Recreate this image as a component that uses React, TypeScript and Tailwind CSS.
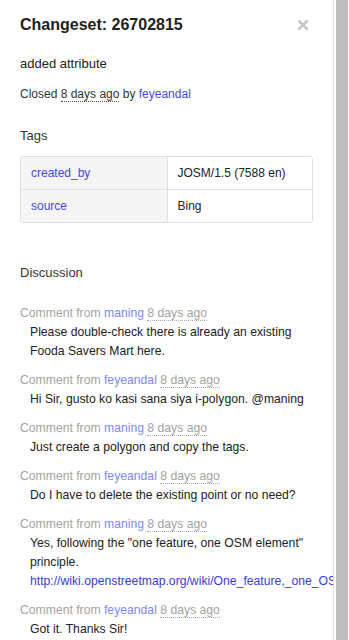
import React from "react";

interface Comment {
  author: string;
  lines: React.ReactNode;
}

const comments: Comment[] = [
  { author: "maning", lines: "Please double-check there is already an existing Fooda Savers Mart here." },
  { author: "feyeandal", lines: "Hi Sir, gusto ko kasi sana siya i-polygon. @maning" },
  { author: "maning", lines: "Just create a polygon and copy the tags." },
  { author: "feyeandal", lines: "Do I have to delete the existing point or no need?" },
  {
    author: "maning",
    lines: (
      <>
        Yes, following the "one feature, one OSM element" principle.
        <br />
        <a href="#" className="whitespace-nowrap text-[#3a3ae0]">
          http://wiki.openstreetmap.org/wiki/One_feature,_one_OSM_element
        </a>
      </>
    ),
  },
  { author: "feyeandal", lines: "Got it. Thanks Sir!" },
];

const tags = [
  { key: "created_by", value: "JOSM/1.5 (7588 en)" },
  { key: "source", value: "Bing" },
];

export default function App() {
  return (
    <div className="flex h-[640px] w-[349px] overflow-hidden bg-white font-['Liberation_Sans',Arial,sans-serif] text-[#222]">
      {/* Sidebar panel */}
      <div className="w-[334px] shrink-0 overflow-hidden border-r border-[#dedede] px-5">
        <div className="flex items-start justify-between pt-[15px]">
          <h2 className="text-[16px] font-bold leading-[20px] text-[#222]">Changeset: 26702815</h2>
          <svg width="10" height="10" viewBox="0 0 10 10" className="mr-[5px] mt-[5px]">
            <path d="M1 1 L9 9 M9 1 L1 9" stroke="#c6c6c6" strokeWidth="2.6" strokeLinecap="square" />
          </svg>
        </div>

        <p className="mt-5 text-[13px] leading-[18px]">added attribute</p>
        <p className="mt-[12px] text-[12px] leading-[18px] text-[#333]">
          Closed <span className="border-b border-dotted border-[#555]">8 days ago</span> by{" "}
          <a href="#" className="text-[#4b46e0]">feyeandal</a>
        </p>

        {/* Tags */}
        <h4 className="mt-[24px] text-[13px] leading-[18px] text-[#333]">Tags</h4>
        <div className="mt-[11px] w-[293px] overflow-hidden rounded-[3px] border border-[#dfdfdf]">
          <table className="w-full border-collapse text-[12px] leading-[18px]">
            <tbody>
              {tags.map((t, i) => (
                <tr key={t.key} className={i > 0 ? "border-t border-[#dfdfdf]" : ""}>
                  <td className="w-[146px] border-r border-[#dfdfdf] bg-[#f5f5f5] py-[7px] pl-[10px] text-[#4747e0]">
                    {t.key}
                  </td>
                  <td className="py-[7px] pl-[10px] text-[#222]">{t.value}</td>
                </tr>
              ))}
            </tbody>
          </table>
        </div>

        {/* Discussion */}
        <h4 className="mt-[41px] text-[13px] leading-[18px] text-[#333]">Discussion</h4>
        <ul className="mt-[22px]">
          {comments.map((c, i) => (
            <li key={i} className="mb-[10px] text-[12.2px] leading-[19px]">
              <div className="text-[#a3a3a3]">
                Comment from <a href="#" className="text-[#8088f7]">{c.author}</a>{" "}
                <span className="border-b border-dotted border-[#aaa]">8 days ago</span>
              </div>
              <div className="pl-[10px] text-[#222]">{c.lines}</div>
            </li>
          ))}
        </ul>
      </div>

      {/* Scrollbar */}
      <div className="flex w-[15px] shrink-0 pl-[2px] pr-[1px]">
        <div className="w-[12px] bg-[#bdbdbd]" />
      </div>
    </div>
  );
}
